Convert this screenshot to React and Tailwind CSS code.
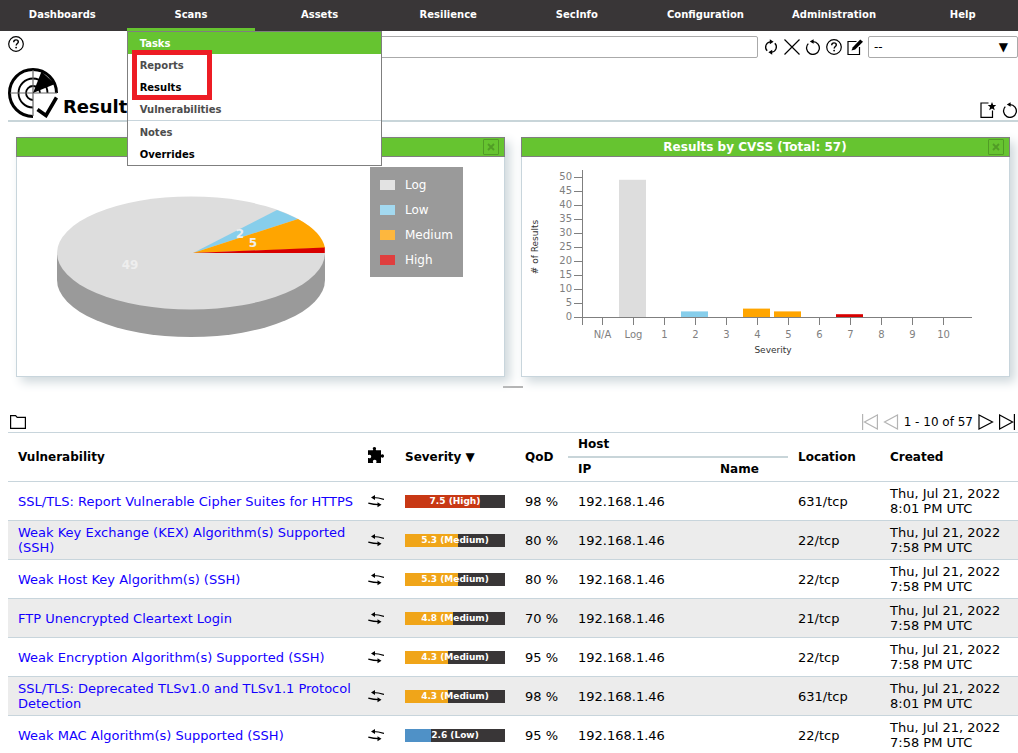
import React from 'react';

const NAV = ['Dashboards', 'Scans', 'Assets', 'Resilience', 'SecInfo', 'Configuration', 'Administration', 'Help'];

const ROWS = [
  { name: 'SSL/TLS: Report Vulnerable Cipher Suites for HTTPS', score: 7.5, level: 'High', qod: 98, port: '631/tcp', time: '8:01 PM UTC' },
  { name: 'Weak Key Exchange (KEX) Algorithm(s) Supported (SSH)', score: 5.3, level: 'Medium', qod: 80, port: '22/tcp', time: '7:58 PM UTC' },
  { name: 'Weak Host Key Algorithm(s) (SSH)', score: 5.3, level: 'Medium', qod: 80, port: '22/tcp', time: '7:58 PM UTC' },
  { name: 'FTP Unencrypted Cleartext Login', score: 4.8, level: 'Medium', qod: 70, port: '21/tcp', time: '7:58 PM UTC' },
  { name: 'Weak Encryption Algorithm(s) Supported (SSH)', score: 4.3, level: 'Medium', qod: 95, port: '22/tcp', time: '7:58 PM UTC' },
  { name: 'SSL/TLS: Deprecated TLSv1.0 and TLSv1.1 Protocol Detection', score: 4.3, level: 'Medium', qod: 98, port: '631/tcp', time: '8:01 PM UTC' },
  { name: 'Weak MAC Algorithm(s) Supported (SSH)', score: 2.6, level: 'Low', qod: 95, port: '22/tcp', time: '7:58 PM UTC' },
];

const LEVEL_BG = { High: 'bg-[#c83814]', Medium: 'bg-[#f0a519]', Low: 'bg-[#4f91c7]' };

function Icon({ children, className = 'size-4' }) {
  return (
    <svg viewBox="0 0 16 16" className={`shrink-0 ${className}`} fill="none" stroke="currentColor" aria-hidden="true">
      {children}
    </svg>
  );
}

const HelpIcon = () => (
  <Icon>
    <circle cx="8" cy="8" r="7.3" strokeWidth="1.2" />
    <path d="M5.7 6.2c0-1.5 1-2.3 2.3-2.3s2.3.8 2.3 2c0 1.6-2.1 1.7-2.1 3.5" strokeWidth="1.4" />
    <circle cx="8.1" cy="11.6" r=".9" fill="currentColor" stroke="none" />
  </Icon>
);

const RefreshIcon = () => (
  <Icon>
    <path d="M4.2 11.8A5.3 5.3 0 0 1 7.2 2.8M11.8 4.2A5.3 5.3 0 0 1 8.8 13.2" strokeWidth="1.3" />
    <path d="M6.800.3v5L10.600 2.800zM9.200 10.700v5L5.400 13.200z" fill="currentColor" stroke="none" />
  </Icon>
);

const DeleteIcon = () => (
  <Icon>
    <path d="M.5.5l15 15M15.500.5l-15 15" strokeWidth="1.2" />
  </Icon>
);

const ResetIcon = () => (
  <Icon>
    <path d="M3.300 4.600A6.400 6.400 0 1 0 8 2.600" strokeWidth="1.3" />
    <path d="M4.800 2.400 8.600.3v4.500z" fill="currentColor" stroke="none" />
  </Icon>
);

const EditIcon = () => (
  <Icon>
    <path d="M9.500 2.500H1v13h11.500V8" strokeWidth="1.2" />
    <path d="M4.500 11.600 5.800 8.200 13.200.6 16 2.700 8.200 10.500z" fill="currentColor" stroke="none" />
  </Icon>
);

const NewNoteIcon = () => (
  <Icon>
    <path d="M8.500 1H1v14.300h11.500V8.500" strokeWidth="1.2" />
    <path d="M12 0l1.200 2.900 3 .2-2.300 2 .8 3.200L12 6.600 9.200 8.300l.9-3.200-2.400-2 3.100-.2z" fill="currentColor" stroke="none" />
  </Icon>
);

const FolderIcon = () => (
  <Icon>
    <path d="M.6 14.400V1.600h5l1.600 1.800h8.200v11z" strokeWidth="1.2" />
  </Icon>
);

const PuzzleIcon = () => (
  <Icon>
    <path
      d="M0 3.200h4.800c.5 0 .5-.5.200-.9C4.300 1.200 5.100 0 6.400 0s2.200 1.200 1.500 2.300c-.3.400-.2.900.3.900H13v4c0 .5.500.6.900.3 1-.6 2.100.3 2.100 1.500s-1.100 2.100-2.100 1.500c-.4-.3-.9-.2-.9.3V16H8.600c-.4 0-.5-.4-.3-.8.700-1.200-.2-2.400-1.600-2.400s-2.300 1.200-1.600 2.400c.2.400.1.800-.3.800H0v-4.600c0-.4.400-.5.800-.3 1.200.6 2.400-.2 2.400-1.600S2 7.200.8 7.900C.4 8.100 0 8 0 7.600z"
      fill="currentColor"
      stroke="none"
    />
  </Icon>
);

const SwapIcon = () => (
  <Icon>
    <path d="M5 4.500c4 0 7.500.7 11 1.900M.3 10.200c3.700 1.100 7 1.500 11 1.500" strokeWidth="1.2" />
    <path d="M3 4.500 7 2v5zM13.500 11.700 9.500 9.200v5z" fill="currentColor" stroke="none" />
  </Icon>
);

const FirstIcon = () => (
  <Icon>
    <path d="M.6 0v16M15.400 1v14L2.500 8z" strokeWidth="1.2" />
  </Icon>
);
const PrevIcon = () => (
  <Icon>
    <path d="M14.500 1v14L1.500 8z" strokeWidth="1.2" />
  </Icon>
);
const NextIcon = () => (
  <Icon>
    <path d="M1 1v14l13.500-7z" strokeWidth="1.2" />
  </Icon>
);
const LastIcon = () => (
  <Icon>
    <path d="M15.400 0v16M.6 1v14l13-7z" strokeWidth="1.2" />
  </Icon>
);

function RadarIcon() {
  return (
    <svg viewBox="0 0 50 50" className="size-[50px] shrink-0" fill="none" stroke="#000" aria-hidden="true">
      <path d="M25 48.500A23.500 23.500 0 1 1 48.500 25" strokeWidth="3" />
      <path d="M25 39.500A14.500 14.500 0 1 1 39.500 25M25 32A7 7 0 1 1 32 25" strokeWidth="1.8" />
      <path d="M25 2v46M2 25h47" strokeWidth="1.2" stroke="#666" />
      <path d="M25 25 33.500 3.500 47 16z" fill="#000" stroke="none" />
      <path d="M29.500 41.500l8.500 6L48.500 29.500" strokeWidth="3.6" />
    </svg>
  );
}

function IconButton({ label, children, className = '' }) {
  return (
    <button type="button" aria-label={label} className={`block shrink-0 ${className}`}>
      {children}
    </button>
  );
}

function ScansMenu() {
  const item = 'block h-[22px] pl-3 leading-[23px]';
  return (
    <div className="absolute left-0 top-[31px] z-20 w-[255px] border border-[#7f7f7f] bg-white text-left text-[10px] text-[#4c4c4c]">
      <a href="#tasks" className={`${item} bg-[#66c430] text-white`}>Tasks</a>
      <a href="#reports" className={item}>Reports</a>
      <a href="#results" className={`${item} text-black`}>Results</a>
      <a href="#vulnerabilities" className={item}>Vulnerabilities</a>
      <a href="#notes" className={`${item} box-content border-t border-[#c8d5dc]`}>Notes</a>
      <a href="#overrides" className={`${item} text-black`}>Overrides</a>
      <div className="pointer-events-none absolute left-1 top-[18px] h-[50px] w-20 border-[5px] border-[#ed1c24]" />
    </div>
  );
}

function Panel({ title, label, children }) {
  return (
    <section
      aria-label={label}
      className="flex h-60 min-w-0 flex-1 flex-col border border-[#c8d5dc] bg-white shadow-[5px_5px_10px_#cfd8dc]"
    >
      <header className="-mx-px -mt-px flex h-5 shrink-0 items-center justify-end border border-[#7f7f7f] bg-[#66c430] pr-[5px]">
        {title && <h2 className="flex-1 text-center text-[12px] font-bold leading-[18px] text-white">{title}</h2>}
        <button
          type="button"
          aria-label="Close"
          className="flex size-4 items-center justify-center rounded-[1px] border border-[#519c26] text-[#519c26]"
        >
          <svg viewBox="0 0 8 8" className="size-2" fill="none" stroke="currentColor" aria-hidden="true">
            <path d="M1 1l6 6M7 1L1 7" strokeWidth="1.8" />
          </svg>
        </button>
      </header>
      {children}
    </section>
  );
}

const LEGEND = [
  ['Log', '#e3e3e3'],
  ['Low', '#a3d9f0'],
  ['Medium', '#fdb73e'],
  ['High', '#e03e3e'],
];

function PieChart() {
  return (
    <svg viewBox="0 0 487 219" className="h-[219px] w-full" role="img" aria-label="Results by severity class">
      <path d="M40 96v27a134 57 0 0 0 268 0v-27z" fill="#9a9a9a" />
      <ellipse cx="174" cy="96" rx="134" ry="56.500" fill="#ddd" />
      <path d="M176 96 260 53Q271 57 281 62z" fill="#87ceeb" />
      <path d="M176 96 281 62Q305 75 308 91z" fill="#ffa500" />
      <path d="M176 96 307.800 90.500V96z" fill="#d80000" />
      <g fill="#eee" fontSize="12" fontWeight="bold" textAnchor="middle">
        <text x="113" y="112">49</text>
        <text x="223" y="81">2</text>
        <text x="236" y="90">5</text>
      </g>
      <rect x="353" y="10" width="93" height="110" fill="#9a9a9a" />
      {LEGEND.map(([label, color], i) => (
        <g key={label}>
          <rect x="363" y={23 + i * 25} width="15" height="10" fill={color} />
          <text x="388" y={32 + i * 25} fill="#fff" fontSize="12">{label}</text>
        </g>
      ))}
    </svg>
  );
}

const BARS = [
  ['N/A', 0], ['Log', 49, '#ddd'], ['1', 0], ['2', 2, '#87ceeb'], ['3', 0], ['4', 3, '#ffa500'],
  ['5', 2, '#ffa500'], ['6', 0], ['7', 1, '#d80000'], ['8', 0], ['9', 0], ['10', 0],
];
const TICKS = [0, 5, 10, 15, 20, 25, 30, 35, 40, 45, 50];

function CvssChart() {
  return (
    <svg viewBox="0 0 487 219" className="h-[219px] w-full" role="img" aria-label="Results by CVSS">
      {BARS.map(([label, value, color], i) =>
        value ? <rect key={label} x={66 + i * 31} y={160 - value * 2.8} width="27" height={value * 2.8} fill={color} /> : null
      )}
      <g stroke="#7f7f7f" shapeRendering="crispEdges">
        <path d="M60.500 13v155M52 160.500h398" />
        {TICKS.map((t) => <path key={t} d={`M52 ${160.5 - t * 2.8}h8`} />)}
        {BARS.map(([label], i) => <path key={label} d={`M${80.5 + i * 31} 160v8`} />)}
      </g>
      <g fill="#7f7f7f" fontSize="10">
        {TICKS.map((t) => (
          <text key={t} x="50" y={163 - t * 2.8} textAnchor="end">{t}</text>
        ))}
        {BARS.map(([label], i) => (
          <text key={label} x={80.5 + i * 31} y="181" textAnchor="middle">{label}</text>
        ))}
      </g>
      <g fill="#333" fontSize="9" textAnchor="middle">
        <text x="251" y="196">Severity</text>
        <text transform="translate(16 90) rotate(-90)">{'# of Results'}</text>
      </g>
    </svg>
  );
}

function SeverityBar({ score, level }) {
  return (
    <div className="relative h-[13px] w-[100px] bg-[#393637]">
      <div className={`h-full ${LEVEL_BG[level]}`} style={{ width: `${score * 10}%` }} />
      <span className="absolute inset-0 text-center text-[9px] font-bold leading-[13px] text-white">
        {score} ({level})
      </span>
    </div>
  );
}

export default function App() {
  return (
    <div className="overflow-x-clip bg-white font-['DejaVu_Sans',Verdana,sans-serif] text-[12px] text-black">
      <nav className="-ml-0.5 -mr-[9px] grid h-[31px] grid-cols-8 bg-[#393637] text-center text-[10px] font-bold leading-[30px] text-white">
        {NAV.map((label) => (
          <div key={label} className="relative">
            <a href={`#${label.toLowerCase()}`} className={`block h-[31px] ${label === 'Scans' ? 'border-b-[3px] border-[#66c430]' : ''}`}>
              {label}
            </a>
            {label === 'Scans' && <ScansMenu />}
          </div>
        ))}
      </nav>

      <div className="flex items-start pl-2 pt-[5px]">
        <IconButton label="Help">
          <HelpIcon />
        </IconButton>
        <div className="ml-auto flex items-center">
          <input aria-label="Filter" type="text" className="h-[22px] w-[480px] rounded-[2px] border border-[#aaa] px-1 outline-none" />
          <div className="flex gap-[5px] px-[5px]">
            <IconButton label="Update filter"><RefreshIcon /></IconButton>
            <IconButton label="Remove filter"><DeleteIcon /></IconButton>
            <IconButton label="Reset filter"><ResetIcon /></IconButton>
            <IconButton label="Filter help"><HelpIcon /></IconButton>
            <IconButton label="Edit filter"><EditIcon /></IconButton>
          </div>
          <div className="relative">
            <select aria-label="Saved filter" className="block h-[22px] w-[150px] appearance-none rounded-[2px] border border-[#aaa] bg-white pl-[5px] outline-none">
              <option>--</option>
            </select>
            <span aria-hidden="true" className="pointer-events-none absolute right-2.5 top-0 leading-[22px]">▼</span>
          </div>
        </div>
      </div>

      <main className="pl-2">
        <div className="mt-2.5 flex h-[54px] items-end border-b-2 border-[#c8d5d9] pb-0.5">
          <RadarIcon />
          <h1 className="ml-[5px] text-[18px] font-bold leading-[22px]">Results</h1>
          <div className="ml-auto flex gap-1.5">
            <IconButton label="New note"><NewNoteIcon /></IconButton>
            <IconButton label="Reset display"><ResetIcon /></IconButton>
          </div>
        </div>

        <div className="flex gap-4 pl-2 pr-2 pt-[15px]">
          <Panel label="Results by severity class"><PieChart /></Panel>
          <Panel title="Results by CVSS (Total: 57)"><CvssChart /></Panel>
        </div>
        <div className="mx-auto mt-[9px] h-0.5 w-5 bg-[#b4b4b4]" />

        <div className="mt-6 flex h-5 items-center justify-between pl-0.5 pr-[3px]">
          <IconButton label="Options"><FolderIcon /></IconButton>
          <div className="flex items-center gap-[5px]">
            <IconButton label="First page" className="text-[#b4b4b4]"><FirstIcon /></IconButton>
            <IconButton label="Previous page" className="text-[#b4b4b4]"><PrevIcon /></IconButton>
            <span>1 - 10 of 57</span>
            <IconButton label="Next page"><NextIcon /></IconButton>
            <IconButton label="Last page"><LastIcon /></IconButton>
          </div>
        </div>

        <table className="w-full table-fixed border-collapse text-left text-[13px] leading-[15px]">
          <colgroup>
            <col />
            <col className="w-[37px]" />
            <col className="w-[120px]" />
            <col className="w-[53px]" />
            <col className="w-[142px]" />
            <col className="w-[78px]" />
            <col className="w-[92px]" />
            <col className="w-[138px]" />
          </colgroup>
          <thead className="text-[12px]">
            <tr className="h-6 border-t border-[#c8d5dc]">
              <th rowSpan={2} className="px-2.5">Vulnerability</th>
              <th rowSpan={2} className="px-2.5 pb-1" aria-label="Solution type"><PuzzleIcon /></th>
              <th rowSpan={2} className="px-2.5">Severity ▼</th>
              <th rowSpan={2} className="px-2.5">QoD</th>
              <th colSpan={2} className="border-b-2 border-[#c8d5d9] px-2.5">Host</th>
              <th rowSpan={2} className="px-2.5">Location</th>
              <th rowSpan={2} className="px-2.5">Created</th>
            </tr>
            <tr className="h-[25px]">
              <th className="px-2.5">IP</th>
              <th className="px-2.5">Name</th>
            </tr>
          </thead>
          <tbody>
            {ROWS.map((r) => (
              <tr key={r.name} className="h-[39px] border-t border-[#c8d5dc] even:bg-[#ececec]">
                <td className="py-1 pl-2.5"><a href="#result" className="text-[#1300ff]">{r.name}</a></td>
                <td className="px-2.5"><SwapIcon /></td>
                <td className="px-2.5"><SeverityBar score={r.score} level={r.level} /></td>
                <td className="whitespace-nowrap pl-2.5">{r.qod} %</td>
                <td className="px-2.5">192.168.1.46</td>
                <td className="px-2.5" />
                <td className="px-2.5">{r.port}</td>
                <td className="px-2.5">Thu, Jul 21, 2022<br />{r.time}</td>
              </tr>
            ))}
          </tbody>
        </table>
      </main>
    </div>
  );
}
